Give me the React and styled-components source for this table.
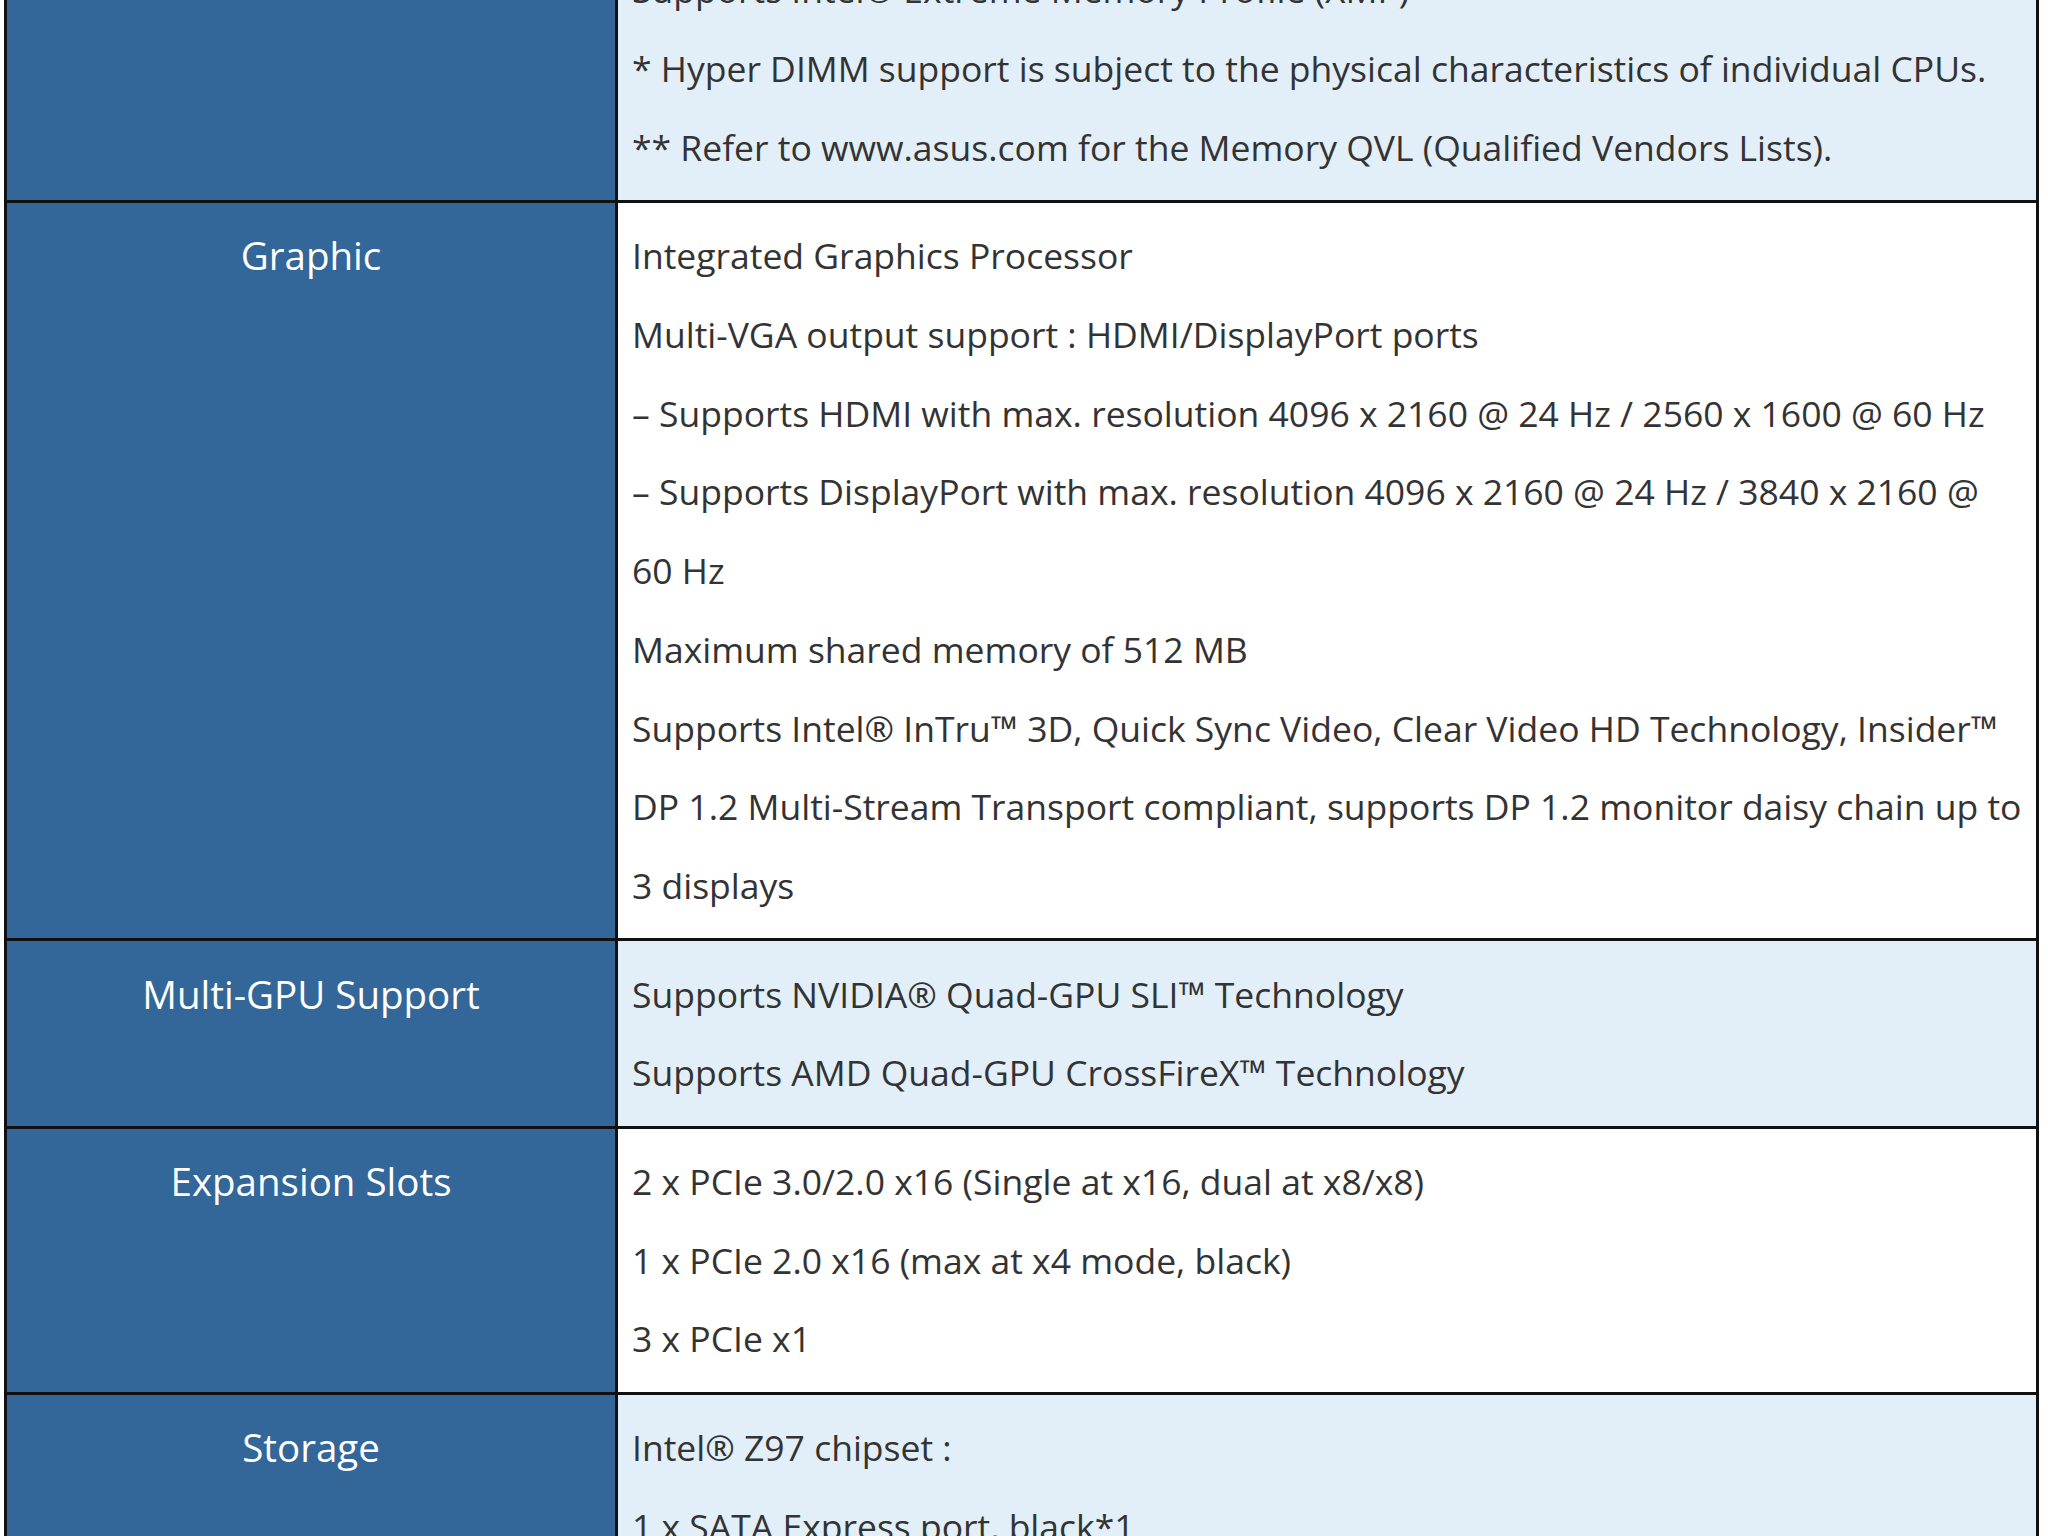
import React from "react";
import styled, { createGlobalStyle } from "styled-components";

const GlobalStyle = createGlobalStyle`
  html, body {
    margin: 0;
    padding: 0;
    background: #ffffff;
    overflow: hidden;
  }
  body {
    font-family: "Open Sans", "Noto Sans", "Liberation Sans", sans-serif;
  }
`;

const Viewport = styled.div`
  height: 1536px;
  overflow: hidden;
`;

const SpecTable = styled.div`
  box-sizing: border-box;
  width: 2035px;
  margin: -145px 0 0 4px;
  border: 3px solid #111;
  display: flex;
  flex-direction: column;
`;

const Row = styled.div`
  display: grid;
  grid-template-columns: 611px 1fr;
  & + & {
    border-top: 3px solid #111;
  }
`;

const Label = styled.div`
  background: #336699;
  color: #ffffff;
  border-right: 3px solid #111;
  padding: 13.5px 14px;
  text-align: center;
  font-size: 38.5px;
  line-height: 78.7px;
`;

const Cell = styled.div`
  background: ${(p) => (p.$shaded ? "#e2eff8" : "#ffffff")};
  color: #333333;
  padding: 13.5px 14px 13.5px 14px;
  font-size: 35.5px;
  line-height: 78.7px;
`;

const Item = styled.div``;

const rows = [
  {
    label: "Memory",
    items: [
      "Dual Channel Memory Architecture",
      "Supports Intel® Extreme Memory Profile (XMP)",
      "* Hyper DIMM support is subject to the physical characteristics of individual CPUs.",
      "** Refer to www.asus.com for the Memory QVL (Qualified Vendors Lists).",
    ],
  },
  {
    label: "Graphic",
    items: [
      "Integrated Graphics Processor",
      "Multi-VGA output support : HDMI/DisplayPort ports",
      "– Supports HDMI with max. resolution 4096 x 2160 @ 24 Hz / 2560 x 1600 @ 60 Hz",
      "– Supports DisplayPort with max. resolution 4096 x 2160 @ 24 Hz / 3840 x 2160 @ 60 Hz",
      "Maximum shared memory of 512 MB",
      "Supports Intel® InTru™ 3D, Quick Sync Video, Clear Video HD Technology, Insider™",
      "DP 1.2 Multi-Stream Transport compliant, supports DP 1.2 monitor daisy chain up to 3 displays",
    ],
  },
  {
    label: "Multi-GPU Support",
    items: [
      "Supports NVIDIA® Quad-GPU SLI™ Technology",
      "Supports AMD Quad-GPU CrossFireX™ Technology",
    ],
  },
  {
    label: "Expansion Slots",
    items: [
      "2 x PCIe 3.0/2.0 x16 (Single at x16, dual at x8/x8)",
      "1 x PCIe 2.0 x16 (max at x4 mode, black)",
      "3 x PCIe x1",
    ],
  },
  {
    label: "Storage",
    items: [
      "Intel® Z97 chipset :",
      "1 x SATA Express port, black*1",
      "1 x M.2 Socket 3, with M Key, type 2260/2280 storage devices support (SATA mode only)*1",
      "4 x SATA 6Gb/s port(s), yellow",
      "Support Raid 0, 1, 5, 10",
    ],
  },
];

export default function App() {
  return (
    <>
      <GlobalStyle />
      <Viewport>
        <SpecTable>
          {rows.map((row, i) => (
            <Row key={row.label}>
              <Label>{row.label}</Label>
              <Cell $shaded={i % 2 === 0}>
                {row.items.map((t) => (
                  <Item key={t}>{t}</Item>
                ))}
              </Cell>
            </Row>
          ))}
        </SpecTable>
      </Viewport>
    </>
  );
}
